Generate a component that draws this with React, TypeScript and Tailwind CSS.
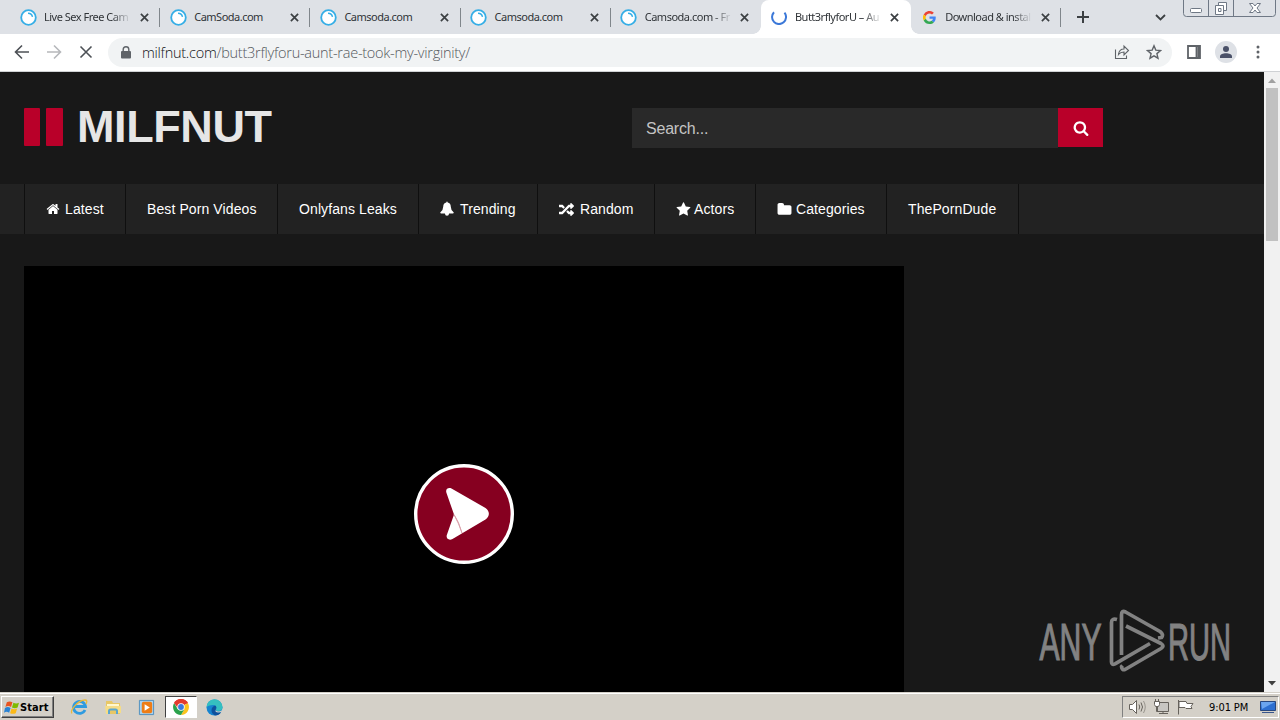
import React from 'react'
import { FaRandom } from 'react-icons/fa';

const tabs = [
  { title: 'Live Sex Free Cam', icon: 'cam', fade: true },
  { title: 'CamSoda.com', icon: 'cam' },
  { title: 'Camsoda.com', icon: 'cam' },
  { title: 'Camsoda.com', icon: 'cam' },
  { title: 'Camsoda.com - Fr', icon: 'cam', fade: true },
  { title: 'Butt3rflyforU – Au', icon: 'load', active: true, fade: true },
  { title: 'Download & instal', icon: 'google', fade: true },
];

const HOME = 'M1472 992v480q0 26-19 45t-45 19h-384v-384h-256v384h-384q-26 0-45-19t-19-45v-480q0-1 .5-3t.5-3l575-474 575 474q1 2 1 6zm223-69l-62 74q-8 9-21 11h-3q-13 0-21-7l-692-577-692 577q-12 8-24 7-13-2-21-11l-62-74q-8-10-7-23.5t11-21.5l719-599q32-26 76-26t76 26l244 204v-195q0-14 9-23t23-9h192q14 0 23 9t9 23v408l219 182q10 8 11 21.5t-7 23.5z';
const STAR = 'M1728 647q0 22-26 48l-363 354 86 500q1 7 1 20 0 21-10.5 35.5t-30.5 14.5q-19 0-40-12l-449-236-449 236q-22 12-40 12-21 0-31.5-14.5t-10.5-35.5q0-6 2-20l86-500-364-354q-25-27-25-48 0-37 56-46l502-73 225-455q19-41 49-41t49 41l225 455 502 73q56 9 56 46z';
const FOLDER = 'M1728 608v704q0 92-66 158t-158 66h-1216q-92 0-158-66t-66-158v-960q0-92 66-158t158-66h320q92 0 158 66t66 158v32h672q92 0 158 66t66 158z';
const SEARCH = 'M1216 832q0-185-131.5-316.5t-316.5-131.5-316.5 131.5-131.5 316.5 131.5 316.5 316.5 131.5 316.5-131.5 131.5-316.5zm512 832q0 52-38 90t-90 38q-54 0-90-38l-343-342q-179 124-399 124-143 0-273.5-55.5t-225-150-150-225-55.5-273.5 55.5-273.5 150-225 225-150 273.5-55.5 273.5 55.5 225 150 150 225 55.5 273.5q0 220-124 399l343 343q37 37 37 90z';
const BELL = 'M896 64q70 0 76 100 330 70 350 470 10 420 310 620 40 40 10 90-20 48-80 48h-430q-20 250-236 250t-236-250H230q-60 0-80-48-30-50 10-90 300-200 310-620 20-400 350-470 6-100 76-100z';

function Glyph({ d, className }: { d: string; className: string }) {
  return (
    <svg viewBox="0 0 1792 1792" className={className} fill="currentColor"><path d={d} /></svg>
  );
}

const menu = [
  { label: 'Latest', width: 'w-[101px]', icon: <Glyph d={HOME} className="mr-[5px] size-[14px]" /> },
  { label: 'Best Porn Videos', width: 'w-[152px]' },
  { label: 'Onlyfans Leaks', width: 'w-[141px]' },
  { label: 'Trending', width: 'w-[119px]', icon: <Glyph d={BELL} className="-ml-px mr-[5px] size-[16px]" /> },
  { label: 'Random', width: 'w-[117px]', icon: <FaRandom className="mr-[6px] size-[15px]" /> },
  { label: 'Actors', width: 'w-[101px]', icon: <Glyph d={STAR} className="mr-[3px] size-[15px]" /> },
  { label: 'Categories', width: 'w-[131px]', icon: <Glyph d={FOLDER} className="mr-[4px] size-[15px]" /> },
  { label: 'ThePornDude', width: 'w-[132px]' },
];

function Google() {
  return (
    <svg viewBox="0 0 48 48" className="size-[13px]">
      <path fill="#ea4335" d="M24 9.5c3.5 0 6.7 1.2 9.2 3.6l6.9-6.9A24 24 0 0 0 2.6 13.2l8 6.2C12.400 13.700 17.700 9.500 24 9.500z" />
      <path fill="#4285f4" d="M47 24.500c0-1.600-.2-3.100-.4-4.500H24v9h12.900a11 11 0 0 1-4.800 7.200l7.700 6C44.400 38 47 32 47 24.500z" />
      <path fill="#fbbc05" d="M10.500 28.600a14.500 14.500 0 0 1 0-9.200l-8-6.200a24 24 0 0 0 0 21.600z" />
      <path fill="#34a853" d="M24 48c6.500 0 11.900-2.100 15.900-5.800l-7.700-6A14.500 14.500 0 0 1 10.500 28.600l-8 6.200A24 24 0 0 0 24 48z" />
    </svg>
  );
}

function TabIcon({ icon }: { icon: string }) {
  if (icon === 'google') return <Google />;
  if (icon === 'load') {
    return (
      <svg viewBox="0 0 16 16" className="size-4" fill="none" stroke="#3b78d8" strokeWidth="2">
        <path d="M3 3.200A7 7 0 1 0 13.500 3.700" />
      </svg>
    );
  }
  return (
    <svg viewBox="0 0 17 17" className="size-[17px]" fill="none" stroke="#35aee6">
      <circle cx="8.500" cy="8.500" r="7.300" fill="#fff" strokeWidth="1.800" />
      <path d="M8 4.300c2.500 0 4 1.300 4.500 3.500" strokeWidth="1.500" />
    </svg>
  );
}

function Tabs() {
  return (
    <div className="flex h-[34px] bg-[#dee1e6] pl-[10px]">
      {tabs.map((tab, key) => (
        <div key={key} className={`relative flex h-full w-[150.200px] shrink-0 items-center pl-[9px] ${tab.active ? 'rounded-t-lg bg-white' : ''}`}>
          <div className="flex w-[18px] justify-center"><TabIcon icon={tab.icon} /></div>
          <div className={`ml-[7px] w-[87px] whitespace-nowrap font-['Noto_Sans',sans-serif] text-[11px] tracking-[-0.500px] text-[#303438] ${tab.fade ? '[mask-image:linear-gradient(to_right,#000_78%,transparent)]' : ''}`}>
            {tab.title}
          </div>
          <svg viewBox="0 0 10 10" className="ml-[8.500px] size-[9px]" stroke="#3c4043" strokeWidth="1.900"><path d="M1 1l8 8M9 1L1 9" /></svg>
          {!tab.active && key !== 4 && <span className="absolute right-0 top-2 h-[19px] w-px bg-[#80868b]" />}
          {key === 4 && <span className="absolute bottom-0 right-0 size-2 bg-[radial-gradient(circle_at_0_0,transparent_7.500px,white_8px)]" />}
          {key === 6 && <span className="absolute bottom-0 left-0 size-2 bg-[radial-gradient(circle_at_100%_0,transparent_7.500px,white_8px)]" />}
        </div>
      ))}
      <div className="flex w-[43px] items-center justify-center">
        <svg viewBox="0 0 12 12" className="size-3" stroke="#3c4043" strokeWidth="2"><path d="M6 0v12M0 6h12" /></svg>
      </div>
      <div className="ml-[51px] flex items-center">
        <svg viewBox="0 0 11 7" className="w-[11px]" fill="none" stroke="#3c4043" strokeWidth="1.800"><path d="M1 1l4.500 4.500L10 1" /></svg>
      </div>
      <svg viewBox="0 0 93 17" className="ml-auto mr-[4px] h-[17px] w-[93px]" fill="none" stroke="#6f7885">
        <path d="M.5 0v13.500q0 3 3 3h86q3 0 3-3V0M25.500 0v16M50.500 0v16" />
        <rect x="7.500" y="8.500" width="11" height="4" rx="1" fill="#fff" />
        <path fill="#fff" d="M35.500 2.500h8v8h-8z" />
        <path fill="#fff" d="M32.500 5.500h8v9h-8zM35.500 8.500h2.500v3h-2.500z" />
        <path fill="#fff" d="M66.500 3.500h3.500l2 2.500 2-2.500h3.500l-3.500 4.500 3.500 4.500h-3.500l-2-2.500-2 2.500h-3.500l3.500-4.500z" />
      </svg>
    </div>
  );
}

function Toolbar() {
  return (
    <div className="flex h-[38px] items-center border-b border-[#cfd1d4] bg-white pl-[14px]">
      <svg viewBox="0 0 80 16" className="-mt-px h-4 w-20" fill="none" strokeWidth="1.600">
        <path stroke="#4d5156" d="M15 8H2M8 1.500L1.500 8 8 14.500" />
        <path stroke="#b6b8bb" d="M33 8h13M40 1.500L46.500 8 40 14.500" />
        <path stroke="#4d5156" d="M66.500 2.500l11 11M77.500 2.500l-11 11" />
      </svg>
      <div className="ml-[14px] flex h-[29px] w-[1064px] items-center rounded-full bg-[#f1f3f4] pl-[13px]">
        <svg viewBox="0 0 10 13" className="-mt-px h-[13px] w-[10px]" fill="#5f6368">
          <rect y="5" width="10" height="7.500" rx="1" />
          <path d="M2.200 5.500V3.500a2.800 2.800 0 0 1 5.600 0v2" fill="none" stroke="#5f6368" strokeWidth="1.400" />
        </svg>
        <span className="ml-[11px] w-[340px] whitespace-nowrap font-['Open_Sans',sans-serif] text-[14.500px] font-light tracking-[-0.260px] text-[#54585d]">
          <span className="text-[#101114]">milfnut.com</span>/butt3rflyforu-aunt-rae-took-my-virginity/
        </span>
        <svg viewBox="0 0 16 16" className="-mt-px ml-auto size-4" fill="none" stroke="#5f6368" strokeWidth="1.100">
          <path d="M1.500 5.500v9h11v-3M4.500 10.500c.5-4 2.500-5.500 5.500-5.500V2l4.500 4.500L10 11V8c-2.500 0-4 .6-5.500 2.500z" />
        </svg>
        <svg viewBox="0 0 16 16" className="-mt-px ml-[16px] mr-[10px] size-4" fill="none" stroke="#5f6368" strokeWidth="1.400">
          <path d="M8 1.800l1.800 4.300 4.700.4-3.600 3.100 1.100 4.600L8 11.800l-4 2.400 1.100-4.600-3.600-3.100 4.700-.4z" />
        </svg>
      </div>
      <svg viewBox="0 0 14 14" className="-mt-px ml-[15px] size-[14px]" fill="none" stroke="#5f6368" strokeWidth="1.800"><path d="M1 1h12v12H1zM9.500 1v12M11.500 1v12" /></svg>
      <div className="-mt-px ml-[14px] flex size-[22px] items-center justify-center rounded-full bg-[#dee1e6]">
        <svg viewBox="0 0 12 12" className="size-3" fill="#4a5168"><circle cx="6" cy="3" r="3" /><path d="M0 12v-1.500C0 8.500 3 7.300 6 7.300s6 1.200 6 3.200V12z" /></svg>
      </div>
      <svg viewBox="0 0 4 14" className="-mt-px ml-[19px] h-[14px] w-1" fill="#5f6368"><circle cx="2" cy="2" r="1.500" /><circle cx="2" cy="7" r="1.500" /><circle cx="2" cy="12" r="1.500" /></svg>
    </div>
  );
}

function Watermark() {
  return (
    <svg viewBox="0 0 194 64" className="absolute bottom-[19px] right-[32px] h-16 w-[194px]" fill="none">
      <g fill="#828282" stroke="#828282" strokeWidth="1.200" fontFamily="Liberation Sans Narrow, Liberation Sans, sans-serif" fontSize="52">
        <text x="1.500" y="50.500" textLength="62" lengthAdjust="spacingAndGlyphs">ANY</text>
        <text x="130" y="50.500" textLength="63" lengthAdjust="spacingAndGlyphs">RUN</text>
      </g>
      <g stroke="#828282" strokeWidth="3.700" strokeLinejoin="round">
        <path d="M79 10.500q-5.500-1.500-5.500 3V53q0 3.500 3.500 1.800L112 34.500" />
        <path d="M83.500 46V6q0-5 4-3L122 22.500q4 3 1.500 6l-3.500.5" />
        <path d="M88 17l35 17.500q4 2.500 0 5L87 60.500q-3 1-3.500-3l1-1" />
      </g>
    </svg>
  );
}

function Site() {
  return (
    <div className="relative h-[620px] w-[1264px] overflow-hidden bg-[#181818] font-['Liberation_Sans',Arial,sans-serif]">
      <header className="flex h-[112px] items-start pl-6 pt-9">
        <div className="flex h-[38px] w-[608px] items-center">
          <span className="h-[38px] w-4 rounded-[1px] bg-[#b90029]" />
          <span className="ml-[6px] h-[38px] w-[17px] rounded-[1px] bg-[#b90029]" />
          <h1 className="ml-[12px] pl-[2px] text-[45px] font-bold leading-[38px] tracking-[-0.400px] text-[#e6e6e6]">MILFNUT</h1>
        </div>
        <div className="flex h-10 w-[426px] items-center bg-[#292929] pl-[14px] pt-px text-[16px] tracking-[-0.200px] text-[#c4c4c4]">Search...</div>
        <button type="button" className="flex h-[39px] w-[45px] items-center justify-center bg-[#b90029] text-white">
          <Glyph d={SEARCH} className="size-4" />
        </button>
      </header>
      <nav className="flex h-[50px] bg-[#222] pl-6 text-[14px] tracking-[0.100px] text-white">
        {menu.map((item, key) => (
          <a key={key} className={`flex h-full items-center whitespace-nowrap border-l border-[#0f0f0f] pl-[21px] ${item.width}`}>
            {item.icon}
            {item.label}
          </a>
        ))}
        <span className="border-l border-[#0f0f0f]" />
      </nav>
      <div className="ml-6 mt-8 flex h-[426px] w-[880px] items-start justify-center bg-black pt-[198px]">
        <svg viewBox="0 0 100 100" className="size-[100px]">
          <circle cx="50" cy="50" r="48.300" fill="#860020" stroke="#fff" strokeWidth="3.400" />
          <path fill="#fff" d="M32.500 29c-1.500-4 2-6 5-4.500l34 19.500c4.500 3 4.500 8.500 0 11.500l-33 19.500c-4 2-7-1-5.500-4.500l7-20z" />
          <path d="M40 50.500q5 7 8 18.500-3-9-8-18.500z" fill="#e9b3bd" stroke="#d79aa6" strokeWidth=".8" />
        </svg>
      </div>
      <Watermark />
    </div>
  );
}

function Scrollbar() {
  return (
    <div className="flex h-[620px] w-4 flex-col items-center bg-[#f1f1f1]">
      <svg viewBox="0 0 16 16" className="size-4 shrink-0" fill="#a0a0a0"><path d="M4 11l4-4.500 4 4.500z" /></svg>
      <div className="h-[153px] w-[12px] bg-[#c1c1c1]" />
      <svg viewBox="0 0 16 16" className="mt-auto size-4 shrink-0" fill="#404040"><path d="M4 5l4 4.500L12 5z" /></svg>
    </div>
  );
}

function Taskbar() {
  return (
    <div className="flex h-7 items-center border-t border-[#d4d0c8] bg-[#d4d0c8] pl-px pt-px shadow-[inset_0_1px_0_#fff]">
      <button type="button" className="flex h-[22px] w-[53px] items-center border border-b-[#404040] border-l-white border-r-[#404040] border-t-white pl-[2px] font-['DejaVu_Sans_Condensed','DejaVu_Sans',sans-serif] text-[11px] font-bold tracking-[0.100px] text-black shadow-[inset_-1px_-1px_0_#808080]">
        <svg viewBox="0 0 16 15" className="mr-px h-[15px] w-[15px] shrink-0">
          <path fill="#e95420" d="M3 2q3-2 6 0L7.500 7q-3-2-6 0z" />
          <path fill="#7fba00" d="M10 2.500q3 1.500 6 0L14.500 7.500q-3 1.500-6 0z" />
          <path fill="#2a83d4" d="M1 8q3-2 6 0l-1.500 5q-3-2-5.500 0z" />
          <path fill="#fbb917" d="M8 8.500q3 1.500 6 0L12.500 13.500q-3 1.500-6 0z" />
        </svg>
        <span className="pt-[2px]">Start</span>
      </button>
      <svg viewBox="0 0 18 18" className="ml-[16px] size-[18px]" fill="none">
        <path d="M15 12a6 6 0 1 1 .5-3.500H5" stroke="#2f9be0" strokeWidth="2.800" />
        <path d="M2 15.500C-1 13 8 2 15 2q3 0 1 4" stroke="#e9b93a" strokeWidth="1.300" />
      </svg>
      <svg viewBox="0 0 18 18" className="ml-[16px] size-[18px]">
        <path d="M2 3h6l1 2h7v11H2z" fill="#e8c765" /><path d="M3 6h12v3H3z" fill="#fff7ce" />
        <path d="M1 8h16v7h-3v-3H5v4H2z" fill="#f5dc87" /><path d="M5 16v-3q0-1.500 1.500-1.500h5q1.500 0 1.500 1.500v3" fill="none" stroke="#5ba6cf" strokeWidth="2" />
      </svg>
      <svg viewBox="0 0 18 18" className="ml-[16px] size-[17px]">
        <path d="M1.500 1.500h15v15h-15z" fill="#a9d2ef" stroke="#4e8dbd" /><rect x="4" y="3" width="11" height="12" rx="2" fill="#ee7d16" /><path d="M7 5.500v7L12.500 9z" fill="#fff" />
      </svg>
      <div className="ml-[10px] flex h-[22px] w-[32px] items-center justify-center border border-b-white border-l-[#404040] border-r-white border-t-[#404040] bg-white">
        <svg viewBox="0 0 16 16" className="size-4">
          <path fill="#e33b2e" d="M8 8L1.100 4a8 8 0 0 1 13.800 0z" />
          <path fill="#fcc31e" d="M8 8l6.900-4A8 8 0 0 1 8 16l3.500-6z" />
          <path fill="#2ba24c" d="M8 8l3.200 2.500L8 16A8 8 0 0 1 1.100 4L5 10.500z" />
          <path fill="#e33b2e" d="M8 4.300h7l-.1-.3A8 8 0 0 0 1.100 4L4.800 9z" />
          <circle cx="8" cy="8" r="3.700" fill="#fff" /><circle cx="8" cy="8" r="2.900" fill="#3979df" />
        </svg>
      </div>
      <svg viewBox="0 0 17 17" className="ml-[9px] size-[17px]">
        <circle cx="8.500" cy="8.500" r="8" fill="#1684cf" />
        <path d="M.5 8.500A8 8 0 0 1 16.500 8q0 4-4.500 4-2 0-2-1.500c1-2 0-4.500-3-4.500S1 7 .5 8.500z" fill="#35bfc0" />
        <path d="M10 10q-1.500 4 5 3.200-2 3.300-6 3.300-5-3-3-7.500 1-2 3-2.500 2 1 1 3.500z" fill="#0e519d" /><path d="M10 9q-1 3 2 3.500 4 0 5-3l-.5 3q-5 2-7 0z" fill="#d4d0c8" />
      </svg>
      <div className="ml-auto mr-[1px] flex h-[22px] w-[157px] items-center border border-b-white border-l-[#808080] border-r-white border-t-[#808080] pl-[6px]">
        <svg viewBox="0 0 66 18" className="h-[18px] w-[66px] shrink-0" fill="#fff" stroke="#66625c">
          <path d="M.5 6.500h3l4-4v13l-4-4h-3z" />
          <path fill="none" d="M10 6.500q1.500 2.500 0 5M12 4.500q3 4.500 0 9" /><path fill="none" stroke="#99958e" d="M14.500 3q3.500 6 0 12" />
          <path d="M28.500 4.500h11v9h-11z" fill="#c8c6c2" /><path d="M30 15.500h9M34 13.500v2M27.500 8.500v5h3" fill="none" /><path d="M25.500 3.500h5v3l-1 2h-3l-1-2zM26.500 1v2M29.500 1v2" />
          <path d="M49.500 2v14.500M50 3.500h7l1 2h6l-2 3 1 2h-6l-1-1h-6z" />
        </svg>
        <span className="ml-[14px] w-[44px] whitespace-nowrap pt-[2px] font-['DejaVu_Sans_Condensed','DejaVu_Sans',sans-serif] text-[11px] tracking-[-0.100px] text-black">9:01 PM</span>
        <svg viewBox="0 0 16 14" className="ml-[7px] h-[14px] w-4 shrink-0"><path d="M.5 1.500h15v9H.5z" fill="#2d6fd0" stroke="#27477f" /><path d="M1 2h14L2 9z" fill="#6ba5ef" /><path d="M2 12.500h12" stroke="#38558b" /></svg>
      </div>
    </div>
  );
}

export default function App() {
  return (
    <div className="flex h-[720px] w-[1280px] flex-col overflow-hidden bg-white">
      <Tabs />
      <Toolbar />
      <div className="flex h-[620px]">
        <Site />
        <Scrollbar />
      </div>
      <Taskbar />
    </div>
  );
}
